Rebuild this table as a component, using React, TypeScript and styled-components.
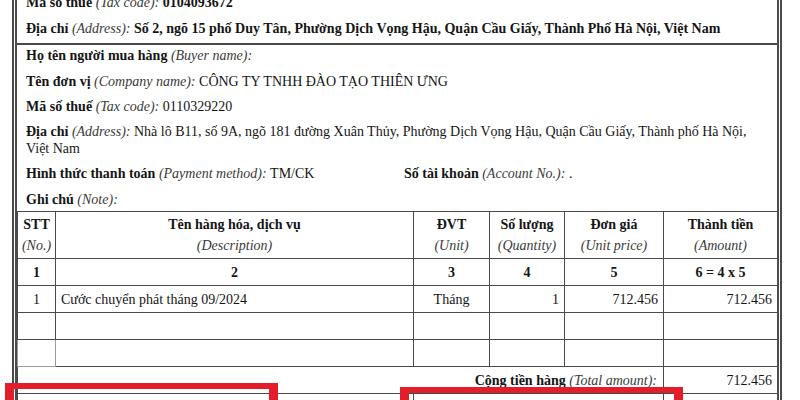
import React from "react";
import styled, { createGlobalStyle } from "styled-components";

const GlobalStyle = createGlobalStyle`
  html, body { margin: 0; padding: 0; background: #fff; overflow: hidden; }
  body { font-family: "Liberation Serif", "Times New Roman", serif; color: #1c1c1c; }
`;

const Page = styled.div`
  position: relative;
  width: 800px;
  height: 400px;
  overflow: hidden;
  background: #fff;
`;

const Sheet = styled.div`
  margin: -6px 0 0 12px;
  width: 760px;
  border-left: 5px double #4a4a4a;
  border-right: 5px double #4a4a4a;
  font-size: 14px;
  line-height: 17px;
`;

const Section = styled.div<{ $top: number; $bottom: number; $divider?: boolean }>`
  display: flex;
  flex-direction: column;
  gap: 8.5px;
  padding: ${(p) => p.$top}px 9px ${(p) => p.$bottom}px 9px;
  border-bottom: ${(p) => (p.$divider ? "2px solid #4a4a4a" : "none")};
`;

const Row = styled.div`
  white-space: nowrap;
`;

const WrapRow = styled.div`
  white-space: normal;
  padding-right: 20px;
  margin-top: -1px;
`;

const SplitRow = styled.div`
  display: grid;
  grid-template-columns: 378px 1fr;
  white-space: nowrap;
`;

const Label = styled.span`
  font-weight: bold;
  color: #151515;
`;

const Hint = styled.span`
  font-style: italic;
  color: #3a3a3a;
`;

const Value = styled.span<{ $bold?: boolean }>`
  font-weight: ${(p) => (p.$bold ? "bold" : "normal")};
  color: #151515;
`;

const Table = styled.table`
  width: 760px;
  border-collapse: collapse;
  table-layout: fixed;
  font-size: 14px;
  line-height: 17px;
`;

const HeadCell = styled.th`
  border: 1px solid #4a4a4a;
  height: 46px;
  padding: 0 2px;
  text-align: center;
  vertical-align: middle;
  font-weight: bold;
  line-height: 21px;
  color: #151515;
  white-space: nowrap;
`;

const SubHead = styled.div`
  font-weight: normal;
  font-style: italic;
  color: #3a3a3a;
`;

const NumCell = styled.td`
  border: 1px solid #4a4a4a;
  height: 26px;
  padding: 0 2px;
  text-align: center;
  font-weight: bold;
  color: #151515;
`;

const Cell = styled.td<{ $align?: "left" | "center" | "right"; $soft?: boolean }>`
  border: 1px solid ${(p) => (p.$soft ? "#9a9a9a" : "#4a4a4a")};
  height: 26px;
  padding: 0 5px;
  text-align: ${(p) => p.$align || "left"};
  vertical-align: middle;
  white-space: nowrap;
  color: #151515;
`;

const TotalRowLabel = styled.td`
  border: 1px solid #4a4a4a;
  height: 25px;
  padding: 0 6px;
  text-align: right;
  white-space: nowrap;
`;

const TaxCell = styled.td<{ $align?: "left" | "right" }>`
  border: 1px solid #4a4a4a;
  height: 26px;
  padding: 3.5px 9px 0;
  text-align: ${(p) => p.$align || "left"};
  vertical-align: top;
  white-space: nowrap;
`;

const Highlight = styled.div<{ $left: number; $top: number; $width: number }>`
  position: absolute;
  left: ${(p) => p.$left}px;
  top: ${(p) => p.$top}px;
  width: ${(p) => p.$width}px;
  height: 60px;
  box-sizing: border-box;
  border-style: solid;
  border-color: #e31e2a;
  border-width: 6px 9px;
  pointer-events: none;
`;

export default function App() {
  return (
    <Page>
      <GlobalStyle />
      <Sheet>
        <Section $top={0} $bottom={6} $divider>
          <Row>
            <Label>Mã số thuế </Label>
            <Hint>(Tax code): </Hint>
            <Value $bold>0104093672</Value>
          </Row>
          <Row>
            <Label>Địa chỉ </Label>
            <Hint>(Address): </Hint>
            <Value $bold>
              Số 2, ngõ 15 phố Duy Tân, Phường Dịch Vọng Hậu, Quận Cầu Giấy, Thành Phố Hà Nội, Việt Nam
            </Value>
          </Row>
        </Section>
        <Section $top={2.5} $bottom={3.5}>
          <Row>
            <Label>Họ tên người mua hàng </Label>
            <Hint>(Buyer name):</Hint>
          </Row>
          <Row>
            <Label>Tên đơn vị </Label>
            <Hint>(Company name): </Hint>
            <Value>CÔNG TY TNHH ĐÀO TẠO THIÊN ƯNG</Value>
          </Row>
          <Row>
            <Label>Mã số thuế </Label>
            <Hint>(Tax code): </Hint>
            <Value>0110329220</Value>
          </Row>
          <WrapRow>
            <Label>Địa chỉ </Label>
            <Hint>(Address): </Hint>
            <Value>
              Nhà lô B11, số 9A, ngõ 181 đường Xuân Thủy, Phường Dịch Vọng Hậu, Quận Cầu Giấy, Thành phố Hà Nội, Việt Nam
            </Value>
          </WrapRow>
          <SplitRow>
            <span>
              <Label>Hình thức thanh toán </Label>
              <Hint>(Payment method): </Hint>
              <Value>TM/CK</Value>
            </span>
            <span>
              <Label>Số tài khoản </Label>
              <Hint>(Account No.): </Hint>
              <Value>.</Value>
            </span>
          </SplitRow>
          <Row>
            <Label>Ghi chú </Label>
            <Hint>(Note):</Hint>
          </Row>
        </Section>
        <Table>
          <colgroup>
            <col style={{ width: 38 }} />
            <col style={{ width: 358 }} />
            <col style={{ width: 76 }} />
            <col style={{ width: 75 }} />
            <col style={{ width: 99 }} />
            <col style={{ width: 114 }} />
          </colgroup>
          <thead>
            <tr>
              <HeadCell>
                STT<SubHead>(No.)</SubHead>
              </HeadCell>
              <HeadCell>
                Tên hàng hóa, dịch vụ<SubHead>(Description)</SubHead>
              </HeadCell>
              <HeadCell>
                ĐVT<SubHead>(Unit)</SubHead>
              </HeadCell>
              <HeadCell>
                Số lượng<SubHead>(Quantity)</SubHead>
              </HeadCell>
              <HeadCell>
                Đơn giá<SubHead>(Unit price)</SubHead>
              </HeadCell>
              <HeadCell>
                Thành tiền<SubHead>(Amount)</SubHead>
              </HeadCell>
            </tr>
          </thead>
          <tbody>
            <tr>
              <NumCell>1</NumCell>
              <NumCell>2</NumCell>
              <NumCell>3</NumCell>
              <NumCell>4</NumCell>
              <NumCell>5</NumCell>
              <NumCell>6 = 4 x 5</NumCell>
            </tr>
            <tr>
              <Cell $align="center">1</Cell>
              <Cell>Cước chuyển phát tháng 09/2024</Cell>
              <Cell $align="center">Tháng</Cell>
              <Cell $align="right">1</Cell>
              <Cell $align="right">712.456</Cell>
              <Cell $align="right">712.456</Cell>
            </tr>
            <tr>
              <Cell />
              <Cell />
              <Cell />
              <Cell />
              <Cell />
              <Cell />
            </tr>
            <tr>
              <Cell $soft />
              <Cell />
              <Cell />
              <Cell />
              <Cell />
              <Cell />
            </tr>
            <tr>
              <TotalRowLabel colSpan={5}>
                <Label>Cộng tiền hàng </Label>
                <Hint>(Total amount):</Hint>
              </TotalRowLabel>
              <Cell $align="right">712.456</Cell>
            </tr>
            <tr>
              <TaxCell colSpan={2}>
                <Label>Thuế suất GTGT </Label>
                <Hint>(VAT rate): </Hint>
                <Value>8%</Value>
              </TaxCell>
              <TaxCell colSpan={3} $align="right">
                <Label>Tiền thuế GTGT </Label>
                <Hint>(VAT amount):</Hint>
              </TaxCell>
              <TaxCell $align="right">56.996</TaxCell>
            </tr>
          </tbody>
        </Table>
      </Sheet>
      <Highlight $left={5} $top={383} $width={273} />
      <Highlight $left={400} $top={387} $width={283} />
    </Page>
  );
}
